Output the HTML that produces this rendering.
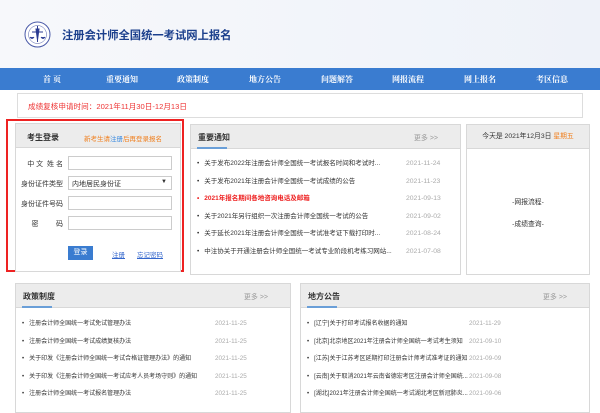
<!DOCTYPE html>
<html><head><meta charset="utf-8"><style>
*{margin:0;padding:0;box-sizing:border-box}
body{width:600px;height:403px;overflow:hidden;background:#fff;font-family:"Liberation Sans","Noto Sans CJK SC",sans-serif;font-size:8px;color:#333;position:relative}
.abs{position:absolute}
.hdr{left:0;top:0;width:600px;height:68px;background:linear-gradient(90deg,#f7f8fb,#eef2f9)}
.title{left:62px;top:27px;font-size:11.3px;font-weight:bold;color:#1b3f8c}
.nav{left:0;top:68px;width:600px;height:22px;background:#3a7cd0}
.nav span{position:absolute;top:6px;color:#fff;font-weight:bold;font-size:8px;transform:translateX(-50%);white-space:nowrap;font-family:"Noto Serif CJK SC",serif}
.notice{left:17px;top:93px;width:566px;height:25px;border:1px solid #ddd;color:#e33;font-size:7.6px;padding:7px 10px}
.redbox{left:6px;top:119px;width:178px;height:153px;border:2px solid #e22}
.panel{border:1px solid #d8d8d8;background:#fff;overflow:hidden}
.ph{height:24px;background:#ececec;border-bottom:1px solid #d8d8d8;position:relative}
.ph b{position:absolute;left:7px;top:7px;font-size:8px;color:#333}
.ph i{position:absolute;left:6px;bottom:-1px;width:30px;height:2px;background:#6a9fd8}
.ph em{position:absolute;right:22px;top:8px;font-style:normal;color:#999;font-size:7px}
.li{position:absolute;left:6px;font-size:6.5px;white-space:nowrap;color:#333;line-height:10px}
.li:before{content:"•";margin-right:5px}
.d{position:absolute;font-size:6.8px;color:#aaa;line-height:10px}
.lab{position:absolute;left:4px;width:43px;font-size:7px;text-align:right;white-space:nowrap}
.inp{position:absolute;left:52px;width:104px;height:14px;border:1px solid #ccc;background:#fff}
</style></head><body>
<div class="abs hdr"></div>
<svg class="abs" style="left:24px;top:21px" width="27" height="27" viewBox="0 0 27 27"><circle cx="13.5" cy="13.5" r="12.5" fill="#fff" stroke="#4a5aa8" stroke-width="1"/><circle cx="13.5" cy="13.5" r="9" fill="none" stroke="#4a5aa8" stroke-width="0.5"/><path d="M13.5 5 L13.5 21 M8 11 L19 11 M6 16 Q8 19 10 16 M17 16 Q19 19 21 16 M12 8 L15 8 L13.5 19Z" stroke="#2a3a90" stroke-width="1" fill="#3a4aa0"/></svg>
<div class="abs title">注册会计师全国统一考试网上报名</div>
<div class="abs nav">
<span style="left:52px">首 页</span><span style="left:122px">重要通知</span><span style="left:193px">政策制度</span><span style="left:265px">地方公告</span><span style="left:337px">问题解答</span><span style="left:408px">网报流程</span><span style="left:480px">网上报名</span><span style="left:552px">考区信息</span>
</div>
<div class="abs notice">成绩复核申请时间：2021年11月30日-12月13日</div>
<div class="abs redbox"></div>
<div class="abs panel" style="left:15px;top:123px;width:166px;height:149px">
<div class="ph"><b style="left:11px;top:8px">考生登录</b><span style="position:absolute;left:68px;top:9px;color:#f08020;font-size:6.5px">新考生请<span style="color:#3a8ae0">注册</span>后再登录报名</span></div>
<div class="lab" style="top:35px">中 文 &nbsp;姓 名</div><div class="inp" style="top:32px"></div>
<div class="lab" style="top:55px">身份证件类型</div><div class="inp" style="top:52px;font-size:7px;padding:2px 3px">内地居民身份证<span style="position:absolute;right:4px;top:2px;font-size:6px">▼</span></div>
<div class="lab" style="top:75px">身份证件号码</div><div class="inp" style="top:72px"></div>
<div class="lab" style="top:95px">密 &nbsp; &nbsp; &nbsp; &nbsp; 码</div><div class="inp" style="top:92px"></div>
<div class="abs" style="left:52px;top:122px;width:25px;height:14px;background:#3a7cd0;color:#fff;font-size:7px;text-align:center;line-height:14px">登录</div>
<div class="abs" style="left:96px;top:125px;color:#36c;text-decoration:underline;font-size:6.5px">注册</div>
<div class="abs" style="left:121px;top:125px;color:#36c;text-decoration:underline;font-size:6.5px">忘记密码</div>
</div>
<div class="abs panel" style="left:190px;top:124px;width:271px;height:151px">
<div class="ph"><b>重要通知</b><i></i><em>更多 &gt;&gt;</em></div>
<div class="li" style="top:34px">关于发布2022年注册会计师全国统一考试报名时间和考试时...</div><div class="d" style="left:215px;top:34px">2021-11-24</div>
<div class="li" style="top:52px">关于发布2021年注册会计师全国统一考试成绩的公告</div><div class="d" style="left:215px;top:52px">2021-11-23</div>
<div class="li" style="top:69px;color:#e22;font-weight:bold">2021年报名期间各地咨询电话及邮箱</div><div class="d" style="left:215px;top:69px">2021-09-13</div>
<div class="li" style="top:87px">关于2021年另行组织一次注册会计师全国统一考试的公告</div><div class="d" style="left:215px;top:87px">2021-09-02</div>
<div class="li" style="top:104px">关于延长2021年注册会计师全国统一考试准考证下载打印时...</div><div class="d" style="left:215px;top:104px">2021-08-24</div>
<div class="li" style="top:122px">中注协关于开通注册会计师全国统一考试专业阶段机考练习网站...</div><div class="d" style="left:215px;top:122px">2021-07-08</div>
</div>
<div class="abs panel" style="left:466px;top:124px;width:124px;height:151px">
<div class="ph" style="text-align:center;font-size:6.8px;line-height:24px">今天是 2021年12月3日 <span style="color:#f08020">星期五</span></div>
<div class="abs" style="left:0;width:122px;top:71px;text-align:center;font-size:6.8px">-网报流程-</div>
<div class="abs" style="left:0;width:122px;top:93px;text-align:center;font-size:6.8px">-成绩查询-</div>
</div>
<div class="abs panel" style="left:15px;top:283px;width:276px;height:130px">
<div class="ph"><b>政策制度</b><i style="left:6px"></i><em>更多 &gt;&gt;</em></div>
<div class="li" style="top:35px;font-size:6px">注册会计师全国统一考试免试管理办法</div><div class="d" style="left:199px;top:35px;font-size:6.3px">2021-11-25</div>
<div class="li" style="top:53px;font-size:6px">注册会计师全国统一考试成绩复核办法</div><div class="d" style="left:199px;top:53px;font-size:6.3px">2021-11-25</div>
<div class="li" style="top:70px;font-size:6px">关于印发《注册会计师全国统一考试合格证管理办法》的通知</div><div class="d" style="left:199px;top:70px;font-size:6.3px">2021-11-25</div>
<div class="li" style="top:88px;font-size:6px">关于印发《注册会计师全国统一考试应考人员考场守则》的通知</div><div class="d" style="left:199px;top:88px;font-size:6.3px">2021-11-25</div>
<div class="li" style="top:105px;font-size:6px">注册会计师全国统一考试报名管理办法</div><div class="d" style="left:199px;top:105px;font-size:6.3px">2021-11-25</div>
</div>
<div class="abs panel" style="left:300px;top:283px;width:290px;height:130px">
<div class="ph"><b>地方公告</b><i></i><em>更多 &gt;&gt;</em></div>
<div class="li" style="top:35px;font-size:6px">[辽宁]关于打印考试报名收据的通知</div><div class="d" style="left:168px;top:35px;font-size:6.3px">2021-11-29</div>
<div class="li" style="top:53px;font-size:6px">[北京]北京地区2021年注册会计师全国统一考试考生须知</div><div class="d" style="left:168px;top:53px;font-size:6.3px">2021-09-10</div>
<div class="li" style="top:70px;font-size:6px">[江苏]关于江苏考区延期打印注册会计师考试准考证的通知</div><div class="d" style="left:168px;top:70px;font-size:6.3px">2021-09-09</div>
<div class="li" style="top:88px;font-size:6px">[云南]关于取消2021年云南省德宏考区注册会计师全国统...</div><div class="d" style="left:168px;top:88px;font-size:6.3px">2021-09-08</div>
<div class="li" style="top:105px;font-size:6px">[湖北]2021年注册会计师全国统一考试湖北考区新冠肺炎...</div><div class="d" style="left:168px;top:105px;font-size:6.3px">2021-09-06</div>
</div>
</body></html>
